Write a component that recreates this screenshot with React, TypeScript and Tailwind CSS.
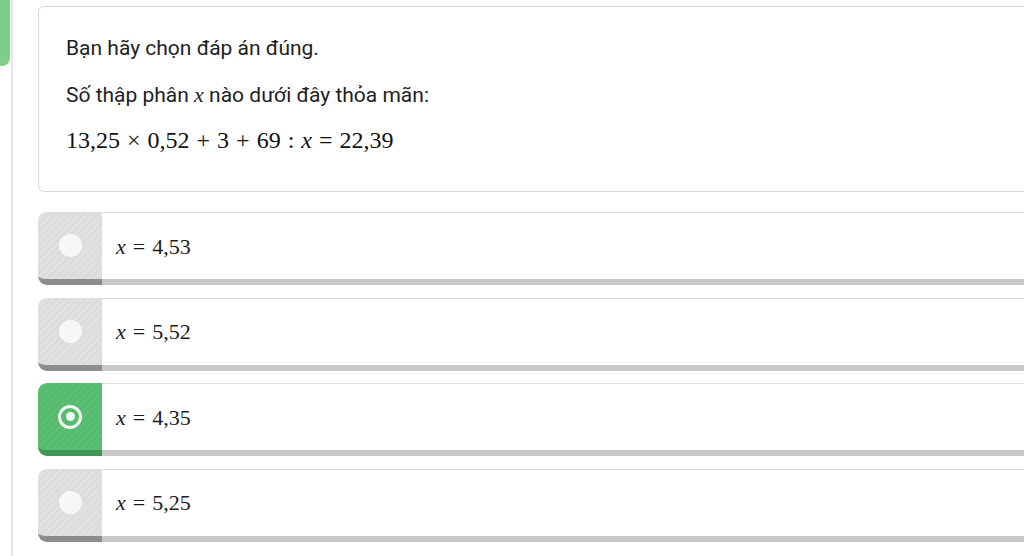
import React from 'react';

type Option = {
    id: number;
    value: string;
    selected?: boolean;
};

const OPTIONS: Option[] = [
    { id: 1, value: '4,53' },
    { id: 2, value: '5,52' },
    { id: 3, value: '4,35', selected: true },
    { id: 4, value: '5,25' },
];

const mathFont = { fontFamily: '"Liberation Serif", "DejaVu Serif", serif' };

const MathX = () => <span className="italic">x</span>;

const Op = ({ children }: { children: React.ReactNode }) => (
    <span className="px-[7px]">{children}</span>
);

const OptionRow = ({ option }: { option: Option }) => {
    const sel = option.selected;
    return (
        <div className="flex h-[73px]">
            <div
                className={
                    sel
                        ? 'w-[64px] shrink-0 flex items-center justify-center rounded-l-[9px] border-b-[6px] border-[#3f9853] bg-[repeating-linear-gradient(135deg,#5bbf71_0px,#5bbf71_3px,#56ba6c_3px,#56ba6c_5px)]'
                        : 'w-[64px] shrink-0 flex items-center justify-center rounded-l-[9px] border-b-[6px] border-[#8d8d8d] bg-[repeating-linear-gradient(135deg,#e0e0e0_0px,#e0e0e0_3px,#dadada_3px,#dadada_5px)]'
                }
            >
                {sel ? (
                    <div className="w-[24px] h-[24px] rounded-full border-[3px] border-[#f1f8f2] flex items-center justify-center">
                        <div className="w-[9px] h-[9px] rounded-full bg-[#f4faf5]"></div>
                    </div>
                ) : (
                    <div className="w-[23px] h-[23px] rounded-full bg-[#f7f7f7]"></div>
                )}
            </div>
            <div className="flex-1 flex items-center pl-[14px] bg-white border-t border-[#dcdcdc] border-b-[6px] border-b-[#c9c9c9]">
                <span className="text-[22px] text-[#1c1c1c]" style={mathFont}>
                    <MathX /><Op>=</Op>{option.value}
                </span>
            </div>
        </div>
    );
};

const App = () => {
    return (
        <div
            className="w-[1024px] h-[556px] overflow-hidden bg-white flex"
            style={{ fontFamily: 'Roboto, "Noto Sans", sans-serif' }}
        >
            <div className="w-[38px] shrink-0 flex">
                <div className="w-[10px] h-[66px] rounded-br-[8px] bg-[#7dce86]"></div>
                <div className="w-[2px] ml-[1px] bg-[#e6e6e6]"></div>
            </div>
            <div className="w-[1020px] shrink-0 pt-[6px] flex flex-col">
                <div className="h-[186px] border border-[#d9d9d9] rounded-[6px] pl-[27px] pt-[27px] text-[21px] text-[#1e1e1e]">
                    <p className="leading-[28px]">Bạn hãy chọn đáp án đúng.</p>
                    <p className="leading-[28px] mt-[19px]">
                        Số thập phân <span className="italic text-[22px]" style={mathFont}>x</span> nào dưới đây thỏa mãn:
                    </p>
                    <p className="leading-[28px] mt-[17px] text-[24px] text-[#111]" style={mathFont}>
                        13,25<Op>×</Op>0,52<Op>+</Op>3<Op>+</Op>69<Op>:</Op><MathX /><Op>=</Op>22,39
                    </p>
                </div>
                <div className="mt-[20px] flex flex-col gap-[12.5px]">
                    {OPTIONS.map((o) => (
                        <OptionRow key={o.id} option={o} />
                    ))}
                </div>
            </div>
        </div>
    );
};

export default App;
